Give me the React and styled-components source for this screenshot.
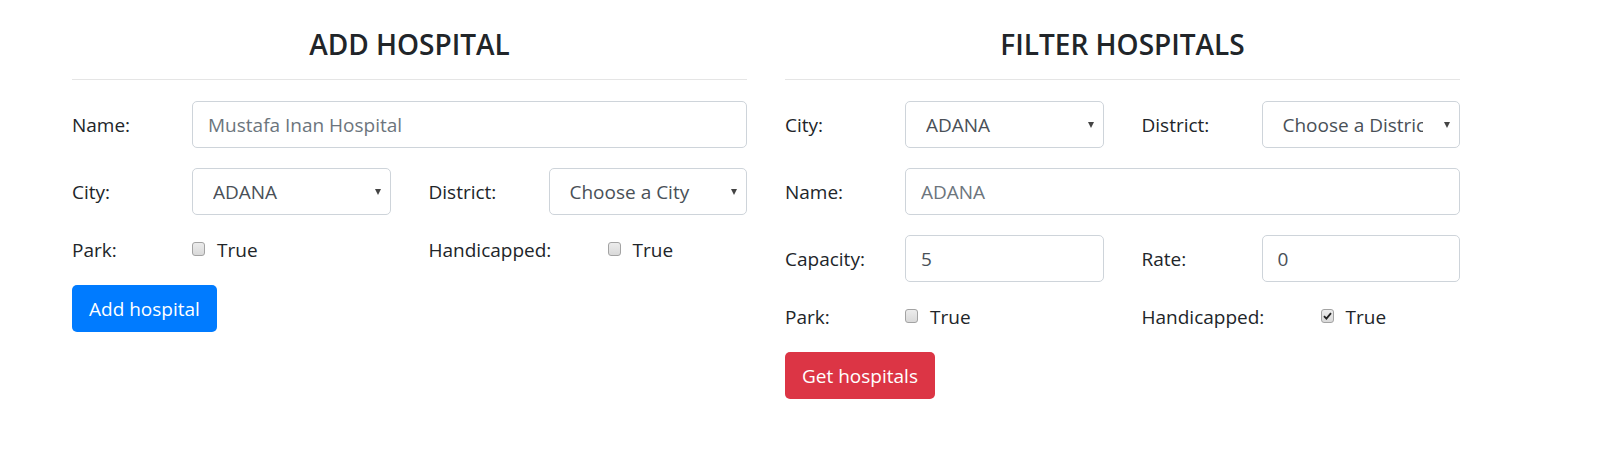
import React from 'react';
import styled, { createGlobalStyle } from 'styled-components';

const GlobalStyle = createGlobalStyle`
  body {
    margin: 0;
    background: #fff;
    color: #212529;
    font-family: "Open Sans", "Liberation Sans", sans-serif;
    font-size: 19px;
    line-height: 30px;
  }
`;

const Page = styled.div`
  display: grid;
  grid-template-columns: 675px 675px;
  column-gap: 38px;
  padding: 23px 0 0 72px;
`;

const Column = styled.section`
  display: flex;
  flex-direction: column;
`;

const Title = styled.h3`
  margin: 0;
  font-size: 28px;
  font-weight: 600;
  line-height: 42px;
  text-align: center;
  color: #212529;
`;

const Divider = styled.hr`
  margin: 14px 0 21px;
  border: 0;
  border-top: 1px solid #e5e5e5;
`;

const Row = styled.div`
  display: grid;
  grid-template-columns: 1fr 1fr;
  column-gap: 38px;
  margin-bottom: 20px;
`;

const Field = styled.div`
  display: grid;
  grid-template-columns: ${(p) => p.labelWidth || 120}px 1fr;
  align-items: ${(p) => (p.check ? 'start' : 'center')};
  grid-column: ${(p) => (p.wide ? '1 / -1' : 'auto')};
`;

const Label = styled.label`
  line-height: 30px;
`;

const TextInput = styled.input`
  box-sizing: border-box;
  width: 100%;
  height: 47px;
  padding: 0 15px;
  border: 1px solid #ced4da;
  border-radius: 5px;
  font: inherit;
  color: #495057;
  background: #fff;
  outline: none;

  &::placeholder {
    color: #6c757d;
    opacity: 1;
  }
`;

const SelectWrap = styled.div`
  position: relative;

  &::after {
    content: '';
    position: absolute;
    right: 10px;
    top: 21px;
    border-left: 3px solid transparent;
    border-right: 3px solid transparent;
    border-top: 6px solid #444;
    pointer-events: none;
  }
`;

const Select = styled.select`
  box-sizing: border-box;
  width: 100%;
  height: 47px;
  padding: 0 36px 0 20px;
  border: 1px solid #ced4da;
  border-radius: 5px;
  font: inherit;
  color: #495057;
  background: #fff;
  appearance: none;
  outline: none;
  text-overflow: clip;
`;

const CheckLine = styled.div`
  display: flex;
  align-items: flex-start;
  gap: 12px;
`;

const Box = styled.span`
  box-sizing: border-box;
  display: flex;
  align-items: center;
  justify-content: center;
  width: 13px;
  height: 14px;
  margin-top: 7px;
  border: 1px solid #a3a3a3;
  border-radius: 3px;
  background: linear-gradient(#ececec, #d9d9d9);
`;

const Button = styled.button`
  align-self: flex-start;
  height: 47px;
  padding: 0 17px;
  border: 0;
  border-radius: 5px;
  font: inherit;
  color: #fff;
  background: ${(p) => (p.danger ? '#dc3545' : '#007bff')};
  cursor: pointer;
`;

const CheckField = ({ label, labelWidth, checked }) => (
  <Field check labelWidth={labelWidth}>
    <Label>{label}</Label>
    <CheckLine>
      <Box>
        {checked && (
          <svg width="9" height="8" viewBox="0 0 9 8">
            <path d="M1 4.2 L3.4 6.6 L8 1.2" fill="none" stroke="#222" strokeWidth="1.8" />
          </svg>
        )}
      </Box>
      <span>True</span>
    </CheckLine>
  </Field>
);

const SelectField = ({ label, value, options }) => (
  <Field>
    <Label>{label}</Label>
    <SelectWrap>
      <Select defaultValue={value}>
        {options.map((o) => (
          <option key={o}>{o}</option>
        ))}
      </Select>
    </SelectWrap>
  </Field>
);

const App = () => (
  <>
    <GlobalStyle />
    <Page>
      <Column>
        <Title>ADD HOSPITAL</Title>
        <Divider />
        <Row>
          <Field wide>
            <Label>Name:</Label>
            <TextInput placeholder="Mustafa Inan Hospital" />
          </Field>
        </Row>
        <Row>
          <SelectField label="City:" value="ADANA" options={['ADANA', 'ANKARA', 'ISTANBUL']} />
          <SelectField label="District:" value="Choose a City" options={['Choose a City']} />
        </Row>
        <Row>
          <CheckField label="Park:" />
          <CheckField label="Handicapped:" labelWidth={179} />
        </Row>
        <Button>Add hospital</Button>
      </Column>

      <Column>
        <Title>FILTER HOSPITALS</Title>
        <Divider />
        <Row>
          <SelectField label="City:" value="ADANA" options={['ADANA', 'ANKARA', 'ISTANBUL']} />
          <SelectField label="District:" value="Choose a District" options={['Choose a District']} />
        </Row>
        <Row>
          <Field wide>
            <Label>Name:</Label>
            <TextInput placeholder="ADANA" />
          </Field>
        </Row>
        <Row>
          <Field>
            <Label>Capacity:</Label>
            <TextInput defaultValue="5" />
          </Field>
          <Field>
            <Label>Rate:</Label>
            <TextInput defaultValue="0" />
          </Field>
        </Row>
        <Row>
          <CheckField label="Park:" />
          <CheckField label="Handicapped:" labelWidth={179} checked />
        </Row>
        <Button danger>Get hospitals</Button>
      </Column>
    </Page>
  </>
);

export default App;
